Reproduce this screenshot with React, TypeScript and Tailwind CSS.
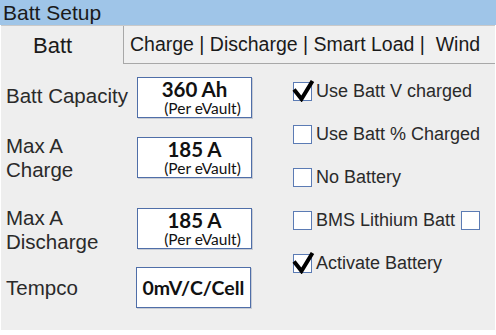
import React from 'react';

const sans = { fontFamily: '"Liberation Sans", Arial, sans-serif' };

function Check() {
  return (
    <svg width="24" height="22" viewBox="0 0 24 22" className="absolute -left-[2px] -top-[3px]">
      <path d="M2 9.5 L9.5 19 L20.5 1" fill="none" stroke="#000" strokeWidth="4" strokeLinejoin="miter" />
    </svg>
  );
}

function Box({ checked }: { checked?: boolean }) {
  return (
    <span className="relative inline-block w-[19px] h-[19px] border border-[#5b7bb4] bg-white shrink-0">
      {checked && <Check />}
    </span>
  );
}

function ValueBox({ value, sub }: { value: string; sub?: string }) {
  return (
    <div className="w-[115px] h-[41px] border border-[#4f6ea8] bg-white flex flex-col items-center justify-center shadow-[1px_1px_0_#c8ccd4]" style={{ fontFamily: 'Lato, "Open Sans", sans-serif' }}>
      <span className={`font-bold text-[#111] ${sub ? 'text-[20.5px] leading-[22px]' : 'text-[19.5px] leading-[22px]'}`}>{value}</span>
      {sub && <span className="text-[15.5px] leading-[17px] text-[#111] ml-[16px]">{sub}</span>}
    </div>
  );
}

export default function App() {
  const rows = [
    { checked: true, label: 'Use Batt V charged' },
    { checked: false, label: 'Use Batt % Charged' },
    { checked: false, label: 'No Battery' },
    { checked: false, label: 'BMS Lithium Batt', extra: true },
    { checked: true, label: 'Activate Battery' },
  ];

  return (
    <div className="w-[496px] h-[335px] bg-white" style={sans}>
      <div className="h-[25px] bg-[#9fc5e8] pl-[3px] text-[21px] text-[#1a1a1a] leading-[25px]">Batt Setup</div>
      <div className="mx-[1px] bg-[#eeeeee] border-t border-[#c9c9c9]">
        <div className="flex h-[38px]">
          <div className="w-[122px] flex items-center pl-[32px] text-[22px] text-[#1a1a1a]">Batt</div>
          <div className="flex-1 flex items-center pl-[6px] border-l border-b border-[#a8a8a8] bg-[#f0f0f0] text-[19.5px] text-[#1a1a1a] whitespace-pre">
            Charge | Discharge | Smart Load |  Wind
          </div>
        </div>
        <div className="flex h-[266px]">
          <div className="w-[292px] flex flex-col pl-[5px] text-[20.5px] text-[#2a2a2a] leading-[24px]">
            <div className="flex items-center mt-[13px] h-[41px]">
              <div className="w-[131px] -mt-[4px]">Batt Capacity</div>
              <ValueBox value="360 Ah" sub="(Per eVault)" />
            </div>
            <div className="flex items-center mt-[19px] h-[41px]">
              <div className="w-[131px]">Max A<br />Charge</div>
              <ValueBox value="185 A" sub="(Per eVault)" />
            </div>
            <div className="flex items-center mt-[30px] h-[41px]">
              <div className="w-[131px] pt-[2px]">Max A<br />Discharge</div>
              <ValueBox value="185 A" sub="(Per eVault)" />
            </div>
            <div className="flex items-center mt-[18px] h-[41px]">
              <div className="w-[130px]">Tempco</div>
              <ValueBox value="0mV/C/Cell" />
            </div>
          </div>
          <div className="flex flex-col pt-[18px] gap-[24px]">
            {rows.map((r) => (
              <div key={r.label} className="flex items-center h-[19px] text-[18px] text-[#2a2a2a]">
                <Box checked={r.checked} />
                <span className="ml-[4px]">{r.label}</span>
                {r.extra && <span className="ml-[6px] flex"><Box /></span>}
              </div>
            ))}
          </div>
        </div>
      </div>
    </div>
  );
}
